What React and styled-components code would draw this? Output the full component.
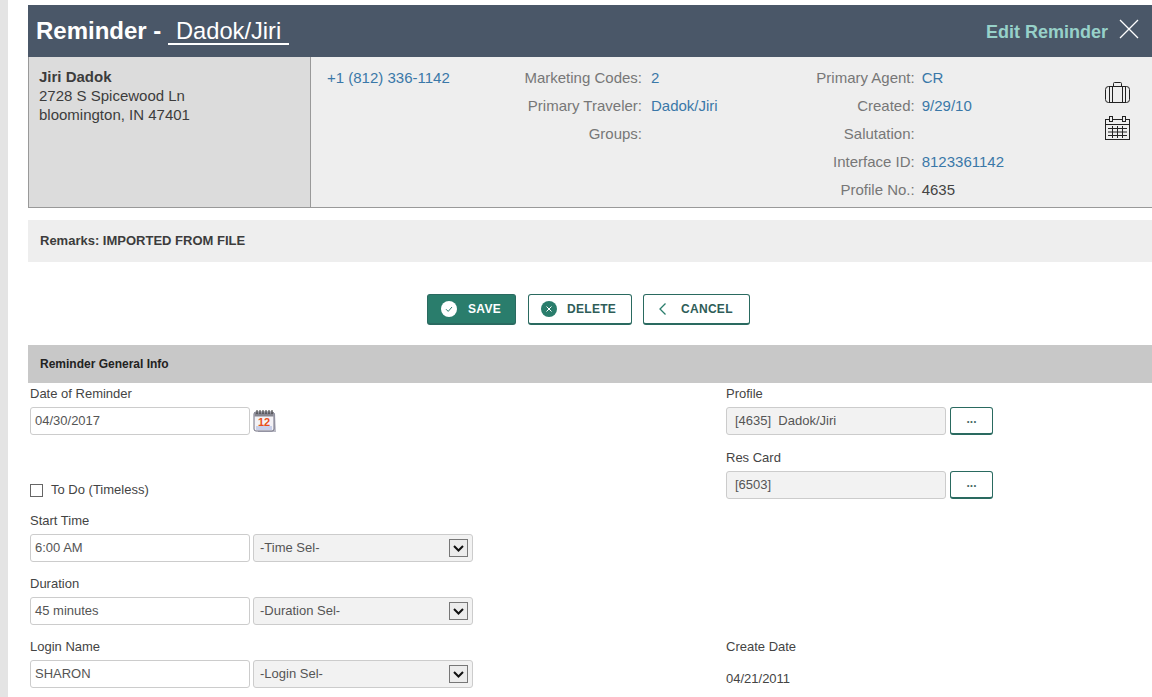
import React from 'react';
import styled, { createGlobalStyle } from 'styled-components';

const GlobalStyle = createGlobalStyle`
  html, body {
    margin: 0;
    padding: 0;
    height: 100%;
    overflow: hidden;
    background: #fff;
    font-family: "Liberation Sans", Arial, sans-serif;
    color: #444;
  }
`;

const Page = styled.div`
  display: flex;
  height: 697px;
  overflow: hidden;
`;

const Rail = styled.div`
  flex: 0 0 8px;
  background: #e4e4e4;
`;

const Main = styled.div`
  flex: 1;
  min-width: 0;
  margin-left: 20px;
  padding-top: 5px;
`;

const Header = styled.div`
  display: flex;
  align-items: center;
  justify-content: space-between;
  height: 52px;
  background: #4a5768;
  padding: 0 13px 0 8px;
  color: #fff;
`;

const Title = styled.div`
  display: flex;
  align-items: baseline;
  font-size: 24px;
  font-weight: bold;
  white-space: pre;
`;

const TitleName = styled.span`
  font-weight: normal;
  font-size: 23.7px;
  margin-left: 7px;
  padding: 0 1px;
  line-height: 24px;
  border-bottom: 2px solid #fff;
`;

const HeaderRight = styled.div`
  display: flex;
  align-items: center;
  gap: 11px;
`;

const EditLabel = styled.span`
  font-size: 18px;
  font-weight: bold;
  color: #97d1c9;
  margin-top: 3px;
`;

const CloseBtn = styled.svg`
  width: 20px;
  height: 20px;
  margin-top: -4px;
  stroke: #fff;
  stroke-width: 1.3;
  fill: none;
`;

const InfoPanel = styled.div`
  display: flex;
  height: 151px;
  box-sizing: border-box;
  background: #eee;
  border-bottom: 1px solid #999;
`;

const AddressCell = styled.div`
  flex: 0 0 283px;
  box-sizing: border-box;
  background: #dcdcdc;
  border-left: 1px solid #999;
  border-right: 1px solid #999;
  padding: 10px 10px;
  font-size: 15px;
  line-height: 19px;
  color: #3c3c3c;
`;

const AddressName = styled.div`
  font-weight: bold;
`;

const PhoneCell = styled.div`
  flex: 0 0 162px;
  padding: 11px 0 0 16px;
  font-size: 15px;
  line-height: 20px;
  box-sizing: border-box;
  color: #3a78a8;
`;

const InfoList = styled.div`
  display: grid;
  grid-template-columns: ${p => p.$labelWidth}px auto;
  grid-auto-rows: 28px;
  column-gap: ${p => p.$gap}px;
  align-content: start;
  padding-top: 7px;
  flex: 0 0 ${p => p.$width}px;
  font-size: 15px;
  line-height: 28px;
`;

const InfoLabel = styled.div`
  text-align: right;
  color: #777;
  white-space: nowrap;
`;

const InfoValue = styled.div`
  color: ${p => (p.$plain ? '#444' : '#3a78a8')};
  white-space: nowrap;
`;

const IconColumn = styled.div`
  display: flex;
  flex-direction: column;
  align-items: center;
  gap: 13px;
  margin-left: auto;
  margin-right: 22px;
  padding-top: 25px;
`;

const Remarks = styled.div`
  margin-top: 12px;
  height: 42px;
  box-sizing: border-box;
  padding-left: 12px;
  background: #eee;
  font-size: 13px;
  font-weight: bold;
  line-height: 41px;
  color: #3c3c3c;
`;

const ButtonRow = styled.div`
  display: flex;
  justify-content: center;
  gap: 11px;
  margin-top: 32px;
  padding-right: 3px;
`;

const ActionButton = styled.button`
  display: flex;
  align-items: center;
  box-sizing: border-box;
  width: ${p => p.$width}px;
  height: 31px;
  padding: 0 0 0 ${p => p.$pad}px;
  gap: ${p => p.$gap}px;
  border: 1px solid #2a6a60;
  border-bottom-width: 2px;
  border-radius: 3px;
  background: ${p => (p.$primary ? '#2a7d6c' : '#fff')};
  color: ${p => (p.$primary ? '#fff' : '#2f5d58')};
  font-family: inherit;
  font-size: 12px;
  font-weight: bold;
  letter-spacing: 0.3px;
`;

const SaveButton = styled(ActionButton)`
  margin-right: 1px;
`;

const Section = styled.div`
  margin-top: 20px;
  height: 38px;
  background: #c8c8c8;
  padding-left: 12px;
  font-size: 12px;
  font-weight: bold;
  line-height: 38px;
  color: #222;
`;

const FormGrid = styled.div`
  display: grid;
  grid-template-columns: 696px 1fr;
  padding-left: 2px;
`;

const Column = styled.div`
  display: flex;
  flex-direction: column;
`;

const Field = styled.div`
  display: flex;
  flex-direction: column;
  height: ${p => p.$height}px;
  padding-top: 3px;
  box-sizing: border-box;
`;

const Label = styled.div`
  font-size: 13px;
  line-height: 15px;
  height: 21px;
  color: #444;
`;

const Row = styled.div`
  display: flex;
  align-items: center;
  gap: 3px;
`;

const TextBox = styled.div`
  box-sizing: border-box;
  width: 220px;
  height: 28px;
  padding-left: ${p => (p.$readonly ? 8 : 4)}px;
  border: 1px solid #ccc;
  border-radius: 3px;
  background: ${p => (p.$readonly ? '#f2f2f2' : '#fff')};
  font-size: 13px;
  line-height: 25px;
  color: #555;
  white-space: pre;
`;

const SelectBox = styled.div`
  display: flex;
  align-items: center;
  justify-content: space-between;
  box-sizing: border-box;
  width: 220px;
  height: 28px;
  padding: 0 4px 0 6px;
  border: 1px solid #ccc;
  border-radius: 3px;
  background: #f2f2f2;
  font-size: 13px;
  line-height: 25px;
  color: #555;
`;

const SelectText = styled.span`
  margin-top: -1px;
`;

const SelectArrow = styled.span`
  display: flex;
  align-items: center;
  justify-content: center;
  box-sizing: border-box;
  width: 19px;
  height: 18px;
  border: 1px solid #777;
  background: #ececec;
`;

const DotsButton = styled.button`
  box-sizing: border-box;
  width: 43px;
  height: 28px;
  margin-left: 1px;
  padding: 0 0 4px;
  border: 1px solid #2a6a60;
  border-bottom-width: 2px;
  border-radius: 3px;
  background: #fff;
  color: #4a6b66;
  font-family: inherit;
  font-size: 12px;
  font-weight: bold;
`;

const CheckRow = styled.div`
  display: flex;
  align-items: center;
  gap: 8px;
  height: 51px;
  padding-top: 9px;
  box-sizing: border-box;
  font-size: 13px;
  color: #444;
`;

const CheckBox = styled.span`
  box-sizing: border-box;
  width: 13px;
  height: 13px;
  margin-top: 2px;
  border: 1px solid #666;
  background: #fff;
`;

const StaticValue = styled.div`
  font-size: 13px;
  line-height: 15px;
  margin-top: 11px;
  color: #444;
`;

const Spacer = styled.div`
  height: ${p => p.$height}px;
`;

const CheckCircle = ({ bg, mark, children }) => (
  <svg width="16" height="16" viewBox="0 0 16 16">
    <circle cx="8" cy="8" r="8" fill={bg} />
    <g fill="none" stroke={mark} strokeWidth="1">{children}</g>
  </svg>
);

const SuitcaseIcon = () => (
  <svg width="25" height="21" viewBox="0 0 25 21" fill="none" stroke="#222" strokeWidth="1">
    <rect x="0.5" y="4.5" width="24" height="16" rx="3" />
    <path d="M4.5 4.5v16M7.5 4.5v16M17.5 4.5v16M20.5 4.5v16" />
    <path d="M8.5 4.5V1.5a1 1 0 0 1 1-1h6a1 1 0 0 1 1 1v3" />
  </svg>
);

const CalendarGridIcon = () => (
  <svg width="25" height="24" viewBox="0 0 25 24" fill="none" stroke="#222" strokeWidth="1">
    <rect x="0.5" y="3.5" width="24" height="20" />
    <path d="M0.5 8.5h24" />
    <rect x="4.5" y="0.5" width="3" height="5" fill="#eee" />
    <rect x="17.5" y="0.5" width="3" height="5" fill="#eee" />
    <path d="M3 12.5h19M3 16h19M3 19.5h19M7.5 10v12M12.5 10v12M17.5 10v12" />
  </svg>
);

const DatePickerIcon = () => (
  <svg width="23" height="24" viewBox="0 0 23 24">
    <path d="M4 4h18l1 19H5z" fill="#b9b9c4" />
    <rect x="1" y="3" width="20" height="19" rx="2" fill="#f4f2f6" stroke="#6f6f80" />
    <rect x="1.5" y="3.5" width="19" height="4" fill="#85858f" />
    <path d="M4 1v4M7 1v4M10 1v4M13 1v4M16 1v4M19 1v4" stroke="#333" strokeWidth="1" />
    <rect x="3" y="17" width="16" height="4" fill="#c9d0ea" />
    <text x="11" y="17" textAnchor="middle" fontSize="11" fontWeight="bold" fontFamily="Liberation Sans" fill="#e8501a">12</text>
  </svg>
);

const ArrowGlyph = () => (
  <svg width="11" height="7" viewBox="0 0 11 7" fill="none" stroke="#111" strokeWidth="2">
    <path d="M1 1l4.5 4.5L10 1" />
  </svg>
);

const SelectField = ({ label, value, select }) => (
  <Field $height={63}>
    <Label>{label}</Label>
    <Row>
      <TextBox>{value}</TextBox>
      <SelectBox>
        <SelectText>{select}</SelectText>
        <SelectArrow><ArrowGlyph /></SelectArrow>
      </SelectBox>
    </Row>
  </Field>
);

const LookupField = ({ label, value }) => (
  <Field $height={64}>
    <Label>{label}</Label>
    <Row>
      <TextBox $readonly>{value}</TextBox>
      <DotsButton>...</DotsButton>
    </Row>
  </Field>
);

export default function App() {
  return (
    <Page>
      <GlobalStyle />
      <Rail />
      <Main>
        <Header>
          <Title>
            Reminder -
            <TitleName> Dadok/Jiri </TitleName>
          </Title>
          <HeaderRight>
            <EditLabel>Edit Reminder</EditLabel>
            <CloseBtn viewBox="0 0 20 20">
              <path d="M1 1l18 18M19 1L1 19" />
            </CloseBtn>
          </HeaderRight>
        </Header>

        <InfoPanel>
          <AddressCell>
            <AddressName>Jiri Dadok</AddressName>
            2728 S Spicewood Ln
            <br />
            bloomington, IN 47401
          </AddressCell>
          <PhoneCell>+1 (812) 336-1142</PhoneCell>
          <InfoList $width={210} $labelWidth={169} $gap={9}>
            <InfoLabel>Marketing Codes:</InfoLabel>
            <InfoValue>2</InfoValue>
            <InfoLabel>Primary Traveler:</InfoLabel>
            <InfoValue>Dadok/Jiri</InfoValue>
            <InfoLabel>Groups:</InfoLabel>
            <InfoValue />
          </InfoList>
          <InfoList $width={250} $labelWidth={197} $gap={7}>
            <InfoLabel>Primary Agent:</InfoLabel>
            <InfoValue>CR</InfoValue>
            <InfoLabel>Created:</InfoLabel>
            <InfoValue>9/29/10</InfoValue>
            <InfoLabel>Salutation:</InfoLabel>
            <InfoValue />
            <InfoLabel>Interface ID:</InfoLabel>
            <InfoValue>8123361142</InfoValue>
            <InfoLabel>Profile No.:</InfoLabel>
            <InfoValue $plain>4635</InfoValue>
          </InfoList>
          <IconColumn>
            <SuitcaseIcon />
            <CalendarGridIcon />
          </IconColumn>
        </InfoPanel>

        <Remarks>Remarks: IMPORTED FROM FILE</Remarks>

        <ButtonRow>
          <SaveButton $primary $width={89} $pad={13} $gap={11}>
            <CheckCircle bg="#fff" mark="#2a7d6c"><path d="M5 8.2l2.2 2.2L11 6" /></CheckCircle>
            SAVE
          </SaveButton>
          <ActionButton $width={104} $pad={12} $gap={10}>
            <CheckCircle bg="#2a7d6c" mark="#fff"><path d="M5.5 5.5l5 5M10.5 5.5l-5 5" /></CheckCircle>
            DELETE
          </ActionButton>
          <ActionButton $width={107} $pad={14} $gap={13}>
            <svg width="10" height="14" viewBox="0 0 10 14" fill="none" stroke="#2a7d6c" strokeWidth="1.3">
              <path d="M7.5 1.5L2 7l5.5 5.5" />
            </svg>
            CANCEL
          </ActionButton>
        </ButtonRow>

        <Section>Reminder General Info</Section>

        <FormGrid>
          <Column>
            <Field $height={76}>
              <Label>Date of Reminder</Label>
              <Row>
                <TextBox>04/30/2017</TextBox>
                <DatePickerIcon />
              </Row>
            </Field>
            <CheckRow>
              <CheckBox />
              To Do (Timeless)
            </CheckRow>
            <SelectField label="Start Time" value="6:00 AM" select="-Time Sel-" />
            <SelectField label="Duration" value="45 minutes" select="-Duration Sel-" />
            <SelectField label="Login Name" value="SHARON" select="-Login Sel-" />
          </Column>
          <Column>
            <LookupField label="Profile" value="[4635]  Dadok/Jiri" />
            <LookupField label="Res Card" value="[6503]" />
            <Spacer $height={125} />
            <Field $height={60}>
              <Label>Create Date</Label>
              <StaticValue>04/21/2011</StaticValue>
            </Field>
          </Column>
        </FormGrid>
      </Main>
    </Page>
  );
}
